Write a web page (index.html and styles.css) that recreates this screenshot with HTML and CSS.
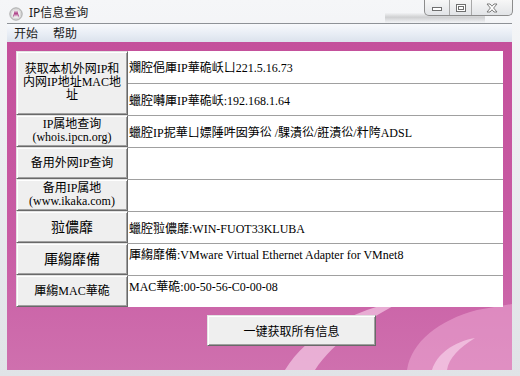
FILE: index.html
```html
<!DOCTYPE html>
<html lang="zh-CN">
<head>
    <meta charset="UTF-8">
    <title>IP信息查询</title>
    <link rel="stylesheet" href="styles.css">
</head>
<body>
    <div class="window">
        <div class="titlebar">
            <span class="app-icon">
                <svg width="14" height="14" viewBox="0 0 14 14">
                    <circle cx="7" cy="7" r="6.2" fill="#d9d9d9" stroke="#9a9a9a" stroke-width="0.8"/>
                    <circle cx="7" cy="7" r="4" fill="#eeeeee"/>
                    <path d="M4.5 9.5 L6 5 L7 8 L8 5 L9.5 9.5" fill="none" stroke="#b0488c" stroke-width="1.1"/>
                </svg>
            </span>
            <span class="title">IP信息查询</span>
            <div class="controls">
                <span class="ctl min">
                    <svg width="12" height="8" viewBox="0 0 12 8"><rect x="1.5" y="3.5" width="9" height="3" fill="#fff" stroke="#6f6f6f"/></svg>
                </span>
                <span class="ctl max">
                    <svg width="12" height="10" viewBox="0 0 12 10"><rect x="1.5" y="1.5" width="9" height="7" fill="#fff" stroke="#6f6f6f"/><rect x="3.5" y="3.5" width="5" height="3" fill="none" stroke="#6f6f6f"/></svg>
                </span>
                <span class="ctl close">
                    <svg width="14" height="10" viewBox="0 0 14 10"><path d="M2 1 L5 1 L7 3.2 L9 1 L12 1 L8.6 5 L12 9 L9 9 L7 6.8 L5 9 L2 9 L5.4 5 Z" fill="#fff" stroke="#6f6f6f" stroke-width="0.9"/></svg>
                </span>
            </div>
        </div>
        <div class="frame">
            <div class="menubar">
                <span class="menu-item">开始</span>
                <span class="menu-item">帮助</span>
            </div>
            <div class="client">
                <div class="grid">
                    <button class="btn tall">获取本机外网IP和<br>内网IP地址MAC地<br>址</button>
                    <div class="cell first">斕腔俋厙IP華硊岆ㄩ221.5.16.73</div>
                    <div class="cell">蠟腔囀厙IP華硊岆:192.168.1.64</div>

                    <button class="btn">IP属地查询<br>(whois.ipcn.org)</button>
                    <div class="cell">蠟腔IP抳華ㄩ嫖陲吽囡笋彸 /騍潰彸/誑潰彸/籵陓ADSL</div>

                    <button class="btn">备用外网IP查询</button>
                    <div class="cell"></div>

                    <button class="btn">备用IP属地<br>(www.ikaka.com)</button>
                    <div class="cell"></div>

                    <button class="btn big">翋儂靡</button>
                    <div class="cell">蠟腔翋儂靡:WIN-FUOT33KLUBA</div>

                    <button class="btn big">厙縐靡備</button>
                    <div class="cell top">厙縐靡備:VMware Virtual Ethernet Adapter for VMnet8</div>

                    <button class="btn">厙縐MAC華硊</button>
                    <div class="cell top">MAC華硊:00-50-56-C0-00-08</div>
                </div>
                <div class="footer">
                    <button class="btn all">一键获取所有信息</button>
                </div>
            </div>
        </div>
    </div>
</body>
</html>
```
FILE: styles.css
```css
html, body {
    margin: 0;
    padding: 0;
}
body {
    width: 520px;
    height: 376px;
    overflow: hidden;
    font-family: "Liberation Serif", "Noto Sans CJK SC", serif;
    font-size: 12px;
    color: #000;
}
.window {
    width: 520px;
    height: 376px;
    background: linear-gradient(180deg, #f5f6f8 0%, #eceef1 40%, #e0e3e7 100%);
}
.titlebar {
    height: 23px;
    display: flex;
    align-items: flex-start;
    padding: 0 7px 0 9px;
    background:
        linear-gradient(180deg, rgba(255,255,255,0) 55%, rgba(110,110,110,0.28) 75%, rgba(255,255,255,0) 100%) 385px 0 / 100px 23px no-repeat;
}
.app-icon {
    width: 14px;
    height: 14px;
    margin-top: 7px;
}
.title {
    margin: 6px 0 0 6px;
    font-family: "Noto Sans", "Noto Sans CJK SC", sans-serif;
    font-size: 12px;
    line-height: 14px;
    color: #1a1a1a;
}
.controls {
    margin-left: auto;
    display: flex;
    height: 15px;
    border: 1px solid #8c8c8c;
    border-top: none;
    border-radius: 0 0 5px 5px;
    background: linear-gradient(180deg, #f7f7f7, #e2e4e7);
    overflow: hidden;
}
.ctl {
    display: flex;
    align-items: center;
    justify-content: center;
}
.ctl + .ctl {
    border-left: 1px solid #a8a8a8;
}
.min { width: 24px; }
.max { width: 21px; }
.close { width: 40px; }
.frame {
    padding: 0 8px 5px 7px;
}
.menubar {
    height: 18px;
    display: flex;
    gap: 15px;
    padding-left: 7px;
    border-top: 1px solid #8e9297;
    background: linear-gradient(180deg, #f7f9fc 0%, #e8edf5 55%, #dbe2ec 100%);
    font-family: "Noto Sans CJK SC", sans-serif;
    font-size: 12px;
    line-height: 18px;
    color: #222;
}
.client {
    height: 328px;
    box-sizing: border-box;
    padding: 9px 9px 0 9px;
    background:
        url("data:image/svg+xml,%3Csvg xmlns='http://www.w3.org/2000/svg' width='505' height='328'%3E%3Cpath d='M278 328 C300 292 345 268 398 258 C362 276 326 300 308 328 Z' fill='%23ffe6f6' fill-opacity='0.55'/%3E%3Cpath d='M400 328 C404 300 432 278 470 268 L505 262 L505 328 Z' fill='%23f3b6dc' fill-opacity='0.45'/%3E%3Cpath d='M425 328 C430 312 446 300 468 296 C452 306 442 316 440 328 Z' fill='%23ffeaf7' fill-opacity='0.5'/%3E%3C/svg%3E") no-repeat,
        linear-gradient(180deg, #c4509b 0%, #c85ca4 60%, #cf70ae 100%);
}
.grid {
    display: grid;
    grid-template-columns: 112px 375px;
    grid-auto-rows: 32px;
}
.btn {
    margin: 0;
    padding: 0;
    box-sizing: border-box;
    background: #efefef;
    border: 1px solid;
    border-color: #e3e3e3 #696969 #696969 #e3e3e3;
    box-shadow: inset 1px 1px 0 #ffffff, inset -1px -1px 0 #a0a0a0;
    font-family: "Liberation Serif", "Noto Sans CJK SC", serif;
    font-size: 12px;
    line-height: 13px;
    color: #000;
    text-align: center;
}
.btn.tall {
    grid-row: span 2;
    padding-bottom: 2px;
}
.btn.big {
    font-size: 14px;
}
.cell {
    background: #fff;
    border-top: 1px solid #a0a0a0;
    padding-left: 1px;
    display: flex;
    align-items: center;
    white-space: nowrap;
    overflow: hidden;
}
.cell.first {
    border-top: none;
}
.cell.top {
    align-items: flex-start;
    padding-top: 1px;
}
.footer {
    padding: 8px 0 0 191px;
}
.btn.all {
    width: 169px;
    height: 31px;
    font-family: "Noto Sans CJK SC", sans-serif;
    font-size: 12px;
}
```
